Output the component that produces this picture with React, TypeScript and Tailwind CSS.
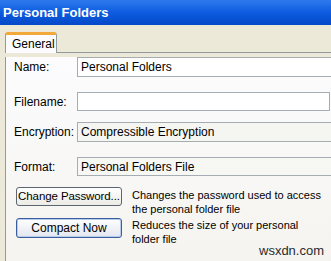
export default function App() {
  const rows = [
    { label: 'Name:', value: 'Personal Folders', top: 'mt-[4px]', cls: 'bg-white w-[280px] shrink-0', h: 'h-[20px]' },
    { label: 'Filename:', value: '', top: 'mt-[15px]', cls: 'bg-white flex-1 mr-px', h: 'h-[19px]' },
    { label: 'Encryption:', value: 'Compressible Encryption', top: 'mt-[11px]', cls: 'bg-[#F5F5F2] w-[280px] shrink-0', h: 'h-[20px]' },
    { label: 'Format:', value: 'Personal Folders File', top: 'mt-[15px]', cls: 'bg-[#F7F7F4] w-[280px] shrink-0', h: 'h-[19px]' },
  ];

  return (
    <div className="h-[261px] w-[331px] overflow-hidden bg-[#ECE9D8] font-['Liberation_Sans',Arial,sans-serif] text-[12px] text-black">
      <div className="flex h-[25px] items-center bg-gradient-to-b from-[#2D7AEE] via-[#0D5CE0] to-[#0548C8] pl-[3px] text-[13px] font-bold text-white">
        Personal Folders
      </div>

      <div className="pl-[5px] pt-[7px]">
        <div className="flex items-end">
          <div className="flex h-[21px] w-[52px] items-center rounded-t-[3px] border-x border-t-[3px] border-x-[#919B9C] border-t-[#F2A83A] bg-[#FCFCFE] pl-[6px]">
            General
          </div>
          <div className="flex-1 border-b border-[#919B9C]" />
        </div>

        <div className="h-[220px] border-l border-[#919B9C] bg-gradient-to-b from-[#FCFCFE] to-[#F4F3EE] pl-[8px]">
          {rows.map((r) => (
            <div key={r.label} className={`flex items-center ${r.top}`}>
              <span className="w-[63px] shrink-0 whitespace-nowrap">{r.label}</span>
              <div className={`flex ${r.h} items-center whitespace-nowrap border border-[#A5ACB2] pl-[3px] ${r.cls}`}>
                {r.value}
              </div>
            </div>
          ))}

          <div className="mt-[11px] flex h-[31px] items-start">
            <button className="ml-[2px] flex h-[19px] w-[106px] shrink-0 items-center justify-center whitespace-nowrap rounded-[3px] border border-[#5B6670] bg-gradient-to-b from-[#FFFFFF] to-[#ECEBE6] px-0 text-[11.5px] tracking-[-0.1px]">
              Change Password...
            </button>
            <p className="ml-[10px] mt-[1px] whitespace-nowrap text-[11px] leading-[14px]">
              Changes the password used to access
              <br />
              the personal folder file
            </p>
          </div>

          <div className="flex h-[31px] items-start">
            <button className="ml-[2px] flex h-[20px] w-[106px] shrink-0 items-center justify-center whitespace-nowrap rounded-[3px] border border-[#3A5E9E] bg-gradient-to-b from-[#FFFFFF] to-[#E3E6EE] px-0 text-[12px] shadow-[inset_0_0_0_1px_#B9CBEA]">
              Compact Now
            </button>
            <p className="ml-[10px] mt-0 whitespace-nowrap text-[11px] leading-[14px]">
              Reduces the size of your personal
              <br />
              folder file
            </p>
          </div>

          <div className="mt-[-6px] pl-[245px] text-[13px] leading-[16px] text-[#2B2B2B]">wsxdn.com</div>
        </div>
      </div>
    </div>
  );
}
